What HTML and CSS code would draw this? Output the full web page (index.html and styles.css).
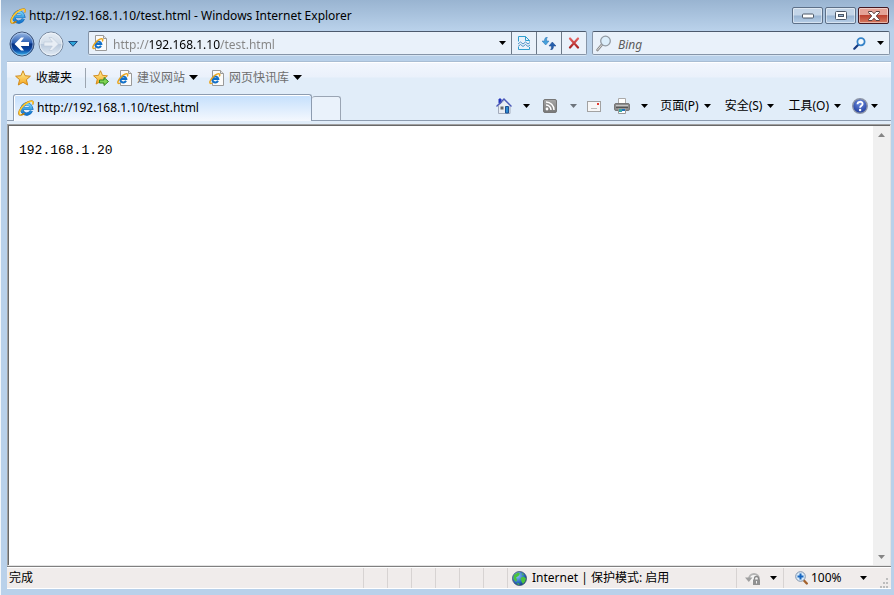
FILE: index.html
```
<!DOCTYPE html>
<html lang="zh-CN">
<head>
<meta charset="utf-8">
<title>http://192.168.1.10/test.html - Windows Internet Explorer</title>
<link rel="stylesheet" href="styles.css">
</head>
<body>
<svg class="defs" aria-hidden="true">
  <defs>
    <linearGradient id="gE" x1="0" y1="0" x2="0" y2="1"><stop offset="0" stop-color="#6fd0f8"/><stop offset="1" stop-color="#1173cc"/></linearGradient>
    <linearGradient id="gStar" x1="0" y1="0" x2="0" y2="1"><stop offset="0" stop-color="#fff3a0"/><stop offset="1" stop-color="#f5a31a"/></linearGradient>
    <linearGradient id="gBack" x1="0" y1="0" x2="0" y2="1"><stop offset="0" stop-color="#9fbde6"/><stop offset=".45" stop-color="#2b5fb4"/><stop offset=".5" stop-color="#07307f"/><stop offset=".75" stop-color="#0b49a5"/><stop offset="1" stop-color="#3cc0f5"/></linearGradient>
    <linearGradient id="gFwd" x1="0" y1="0" x2="0" y2="1"><stop offset="0" stop-color="#e6edf5"/><stop offset=".48" stop-color="#d3deea"/><stop offset=".52" stop-color="#b9c9dc"/><stop offset="1" stop-color="#e3ecf5"/></linearGradient>
    <linearGradient id="gRed" gradientUnits="userSpaceOnUse" x1="0" y1="0" x2="0" y2="12"><stop offset="0" stop-color="#ec6a6a"/><stop offset="1" stop-color="#a01818"/></linearGradient>
    <linearGradient id="gGrey" x1="0" y1="0" x2="0" y2="1"><stop offset="0" stop-color="#a8a8a8"/><stop offset="1" stop-color="#777"/></linearGradient>
    <radialGradient id="gGlobe" cx=".35" cy=".3" r=".8"><stop offset="0" stop-color="#8fc8f5"/><stop offset=".6" stop-color="#2a6cc0"/><stop offset="1" stop-color="#0f3575"/></radialGradient>
    <radialGradient id="gHelp" cx=".5" cy=".3" r=".8"><stop offset="0" stop-color="#6f8fe0"/><stop offset="1" stop-color="#122f92"/></radialGradient>
    <symbol id="ie" viewBox="0 0 16 16">
      <path d="M13.400 10.800A5 5 0 1 1 13.700 8.500H5" fill="none" stroke="#1565b4" stroke-width="3.200"/>
      <path d="M13.200 10.800A5 5 0 1 1 13.500 8.500H5" fill="none" stroke="url(#gE)" stroke-width="2.300"/>
      <path d="M14.600 4.500C15.600 2 15 .8 13 1 9 1.300 3.400 6.400 1.600 10.600.4 13.400.8 15.400 3 15c1.200-.2 2.400-.9 3.500-1.700" fill="none" stroke="#c4820f" stroke-width="1.600"/>
      <path d="M14.600 4C15.300 2 14.700 1.200 13 1.300 9.200 1.600 3.700 6.600 2 10.600c-1 2.600-.7 4.300 1 4" fill="none" stroke="#ffcc35" stroke-width="1.300"/>
    </symbol>
    <symbol id="page" viewBox="0 0 16 16">
      <path d="M3.500.5h8l3 3v12h-11z" fill="#fbfbfa" stroke="#9a9a9a"/>
      <path d="M11.500.5v3h3" fill="#e4e4e4" stroke="#9a9a9a"/>
      <path d="M9 10.800A3 3 0 1 1 9.300 9H4" fill="none" stroke="#1270c8" stroke-width="2"/>
      <path d="M10.300 6.500C11.500 4 10.300 3.200 8 4.200 5 5.500 1.600 9.200 1 11.500c-.5 1.800.2 2.500 2 1.700" fill="none" stroke="#eaa51c" stroke-width="1.400"/>
    </symbol>
    <symbol id="star" viewBox="0 0 16 16">
      <path d="M8 .8l2.100 4.900 5.300.5-4 3.500 1.300 5.300L8 12.300 3.300 15l1.300-5.300-4-3.500 5.300-.5z" fill="url(#gStar)" stroke="#d08a1c" stroke-linejoin="round"/>
    </symbol>
    <symbol id="down" viewBox="0 0 9 5"><path d="M0 0h9L4.500 5z" fill="currentColor"/></symbol>
  </defs>
</svg>

<header class="titlebar">
  <svg class="i16"><use href="#ie"/></svg>
  <h1>http://192.168.1.10/test.html - Windows Internet Explorer</h1>
  <div class="winbtns">
    <button aria-label="最小化"><svg width="12" height="6" viewBox="0 0 12 6"><rect x=".5" y="1" width="11" height="4" rx="1" fill="#fff" stroke="#4c5868"/></svg></button>
    <button aria-label="最大化"><svg width="12" height="9" viewBox="0 0 12 9"><rect x=".5" y=".5" width="11" height="8" rx="1" fill="#fff" stroke="#4c5868"/><rect x="3.500" y="3.500" width="5" height="2" fill="#9ab6d2" stroke="#4c5868"/></svg></button>
    <button class="close" aria-label="关闭"><svg width="12" height="10" viewBox="0 0 12 10"><path d="M.5.500h3.500L6 2.800 8 .5h3.500v1L8.300 5l3.200 3.500v1H8L6 7.200 4 9.500H.5v-1L3.700 5 .5 1.500z" fill="#fff" stroke="#5b4040"/></svg></button>
  </div>
</header>

<nav class="navbar">
  <div class="travel">
    <button class="round" aria-label="后退"><svg width="26" height="26" viewBox="0 0 26 26"><circle cx="13" cy="13" r="12" fill="url(#gBack)" stroke="#3d5275"/><circle cx="13" cy="13" r="11" fill="none" stroke="#bcd4f0" stroke-opacity=".6"/><path d="M5.500 13l6.500-6.500h3L11.700 11H20v4h-8.300l3.300 4.500h-3z" fill="#fff"/></svg></button>
    <button class="round" aria-label="前进"><svg width="26" height="26" viewBox="0 0 26 26"><circle cx="13" cy="13" r="12" fill="url(#gFwd)" stroke="#77889e"/><circle cx="13" cy="13" r="11" fill="none" stroke="#f4f8fc" stroke-opacity=".7"/><path d="M20.500 13L14 6.500h-3l3.300 4.500H6v4h8.300L11 19.500h3z" fill="#e8eef5" stroke="#b8c6d6" stroke-width=".6"/></svg></button>
    <button class="recent" aria-label="最近的网页"><svg width="10" height="6" viewBox="0 0 10 6"><path d="M.7.500h8.600L5 5.300z" fill="#2fa5d8" stroke="#1b4a80"/></svg></button>
  </div>
  <div class="address">
    <svg class="i16"><use href="#page"/></svg>
    <input class="url" type="text" aria-label="地址" value="http://192.168.1.10/test.html">
    <button class="drop" aria-label="显示地址"><svg class="small"><use href="#down"/></svg></button>
    <button class="cell" aria-label="兼容性视图"><svg width="12" height="14" viewBox="0 0 12 14"><path d="M.5 5.500V.5h7l4 4v1M.5 11v2.500h11V11" fill="none" stroke="#2f9fd0"/><path d="M7.500.5v4h4" fill="none" stroke="#2f9fd0"/><path d="M0 8l2.500-2L5 8l2.500-2L10 8l2-1.500M0 10.500l2.500-2 2.500 2 2.500-2 2.500 2L12 9" fill="none" stroke="#3c88bf" stroke-width=".9"/></svg></button>
    <button class="cell" aria-label="刷新"><svg width="14" height="13" viewBox="0 0 14 13"><path d="M5.500 0C3 .3 2.300 2 2.600 4H0l3.700 4L7 4H4.700C4.500 2.300 4.600 1 5.500 0z" fill="#45a2dc" stroke="#2b6cb0" stroke-width=".5"/><path d="M8.500 13c2.500-.3 3.200-2 2.900-4H14l-3.700-4L7 9h2.300c.2 1.700.1 3-.8 4z" fill="#245fae" stroke="#1c4788" stroke-width=".5"/></svg></button>
    <button class="cell" aria-label="停止"><svg width="12" height="12" viewBox="0 0 12 12"><path d="M2 1.500l8 9M10 1.500l-8 9" stroke="url(#gRed)" stroke-width="2.200" stroke-linecap="round"/></svg></button>
  </div>
  <div class="search">
    <svg width="16" height="17" viewBox="0 0 16 17"><path d="M6 9.500L1.500 15" stroke="#888" stroke-width="2.600" stroke-linecap="round"/><path d="M6 9.500L1.500 15" stroke="#ddd" stroke-linecap="round"/><circle cx="9.500" cy="6" r="4.800" fill="#dceefb" stroke="#929aa3" stroke-width="1.300"/></svg>
    <input class="query" type="text" aria-label="搜索" placeholder="Bing">
    <button class="plain" aria-label="搜索"><svg width="13" height="13" viewBox="0 0 13 13"><path d="M5 8L1.300 11.700" stroke="#173a80" stroke-width="2.200" stroke-linecap="round"/><circle cx="8" cy="4.700" r="3.600" fill="#f2f8fd" stroke="#3583c8" stroke-width="1.800"/></svg></button>
    <button class="plain" aria-label="搜索选项"><svg class="small"><use href="#down"/></svg></button>
  </div>
</nav>

<section class="window">
  <div class="favorites">
    <button class="tool fav"><svg class="i16"><use href="#star"/></svg>收藏夹</button>
    <span class="sep"></span>
    <button class="plain" aria-label="添加到收藏夹栏"><svg class="i16" viewBox="0 0 16 16"><use href="#star" width="15" height="15"/><path d="M6.500 10H11V7.500l4.500 4-4.500 4V13H6.500z" fill="#7ed352" stroke="#2f8a24"/></svg></button>
    <button class="tool link"><svg class="i16"><use href="#page"/></svg>建议网站<svg class="arrow"><use href="#down"/></svg></button>
    <button class="tool link"><svg class="i16"><use href="#page"/></svg>网页快讯库<svg class="arrow"><use href="#down"/></svg></button>
  </div>
  <div class="tabrow">
    <button class="tab"><svg class="i16"><use href="#ie"/></svg>http://192.168.1.10/test.html</button>
    <button class="newtab" aria-label="新选项卡"></button>
    <div class="commands">
      <button class="split" aria-label="主页"><svg width="16" height="16" viewBox="0 0 16 16"><path d="M2.500 7.500L8.500 2 14 7.500v8H2.500z" fill="#e9edf3" stroke="#a3abbb"/><path d="M3 1h2v4H3z" fill="#2332c8" stroke="#2332b8"/><path d="M.5 8.500L8 1l7.500 7.500" fill="none" stroke="#4b59b8" stroke-width="1.300"/><rect x="4.500" y="8.500" width="3" height="3" fill="#666"/><path d="M9.500 8.500h3V15h-3z" fill="#2b8ad0" stroke="#1c4f92"/></svg><svg class="small"><use href="#down"/></svg></button>
      <button class="split muted" aria-label="源"><svg width="14" height="14" viewBox="0 0 14 14"><rect x=".5" y=".5" width="13" height="13" rx="1.500" fill="url(#gGrey)" stroke="#777"/><circle cx="4" cy="10" r="1.400" fill="#fff"/><path d="M3 6a5 5 0 0 1 5 5M3 3a8 8 0 0 1 8 8" fill="none" stroke="#fff" stroke-width="1.500"/></svg><svg class="small"><use href="#down"/></svg></button>
      <button class="plain mail" aria-label="阅读邮件"><svg width="14" height="11" viewBox="0 0 14 11"><rect x=".5" y=".5" width="13" height="10" fill="#f7f7f7" stroke="#a2a2a2"/><rect x="10" y="2" width="2" height="2" fill="#e53b32"/><path d="M4 7.500h6" stroke="#bbb"/></svg></button>
      <button class="split print" aria-label="打印"><svg width="16" height="16" viewBox="0 0 16 16"><path d="M4.500.5h7V6h-7z" fill="#fff" stroke="#aaa"/><rect x=".5" y="5.500" width="15" height="7" rx="1.500" fill="#8c8c8c" stroke="#777"/><path d="M2 7.500h12" stroke="#c4c4c4"/><path d="M2 9.500h12" stroke="#555"/><path d="M4.500 10.500h7v5h-7z" fill="#fff" stroke="#999"/><path d="M5 11h3v3H5z" fill="#38a8a2"/><path d="M8 11h3v2H8z" fill="#2470c0"/></svg><svg class="small"><use href="#down"/></svg></button>
      <button class="menu">页面(P)<svg class="small"><use href="#down"/></svg></button>
      <button class="menu">安全(S)<svg class="small"><use href="#down"/></svg></button>
      <button class="menu">工具(O)<svg class="small"><use href="#down"/></svg></button>
      <button class="help" aria-label="帮助"><svg width="16" height="16" viewBox="0 0 16 16"><circle cx="8" cy="8" r="7.300" fill="url(#gHelp)" stroke="#8e96a8" stroke-width="1.400"/><path d="M5.500 6.200C5.500 3 10.600 3 10.600 6c0 1.700-2.500 1.900-2.500 3.800" fill="none" stroke="#fff" stroke-width="1.800"/><circle cx="8.100" cy="12" r="1.200" fill="#fff"/></svg><svg class="small"><use href="#down"/></svg></button>
    </div>
  </div>

  <main class="viewport">
    <p>192.168.1.20</p>
    <div class="scrollbar">
      <button aria-label="向上滚动"><svg width="7" height="4" viewBox="0 0 7 4"><path d="M0 4h7L3.500 0z" fill="#858585"/></svg></button>
      <button aria-label="向下滚动"><svg width="7" height="4" viewBox="0 0 7 4"><path d="M0 0h7L3.500 4z" fill="#858585"/></svg></button>
    </div>
  </main>

  <footer class="status">
    <span class="done">完成</span>
    <span class="slot"></span><span class="slot"></span><span class="slot"></span><span class="slot"></span><span class="slot"></span><span class="slot"></span>
    <span class="zone"><svg width="15" height="15" viewBox="0 0 15 15"><circle cx="7.500" cy="7.500" r="7" fill="url(#gGlobe)" stroke="#3a4d70" stroke-width=".8"/><path d="M2 4l4-2.500 2 1L6.500 5 4 6.500 5 9l-1 2-2.500-3zM8.500 7l3-1.500 2.500 2-1 3-2 2.500-1.500-2.500zM10 2l2 1.500-1.500 1zM5 12l3 1-2 1z" fill="#4bc43c"/></svg>Internet | 保护模式: 启用</span>
    <button class="privacy" aria-label="隐私"><svg width="16" height="15" viewBox="0 0 16 15"><path d="M4 8a5 5 0 1 1 5 5" fill="#f5f5f5" stroke="#b4b4b4" stroke-width="2"/><path d="M0 6.500h7.500L3.800 11z" fill="#a0a0a0"/><path d="M9.500 9V7.500a2 2 0 0 1 4 0V9" fill="none" stroke="#888" stroke-width="1.300"/><rect x="8" y="8.500" width="7" height="5.500" fill="#919191"/><path d="M11.500 10v2.500" stroke="#eee"/></svg><svg class="small"><use href="#down"/></svg></button>
    <button class="zoom"><svg width="13" height="14" viewBox="0 0 13 14"><path d="M8 8.500l3.800 4" stroke="#a4622c" stroke-width="2.400" stroke-linecap="round"/><circle cx="5.500" cy="5.500" r="4.800" fill="#d9ebfa" stroke="#8193ac"/><path d="M5.500 2.500v6M2.500 5.500h6" stroke="#1766c0" stroke-width="2"/></svg>100%<svg class="small"><use href="#down"/></svg></button>
    <svg class="grip" width="10" height="10" viewBox="0 0 10 10"><path d="M7 0h2v2H7zM4 4h2v2H4zM7 4h2v2H7zM1 8h2v2H1zM4 8h2v2H4zM7 8h2v2H7z" fill="#bdbdbd"/></svg>
  </footer>
</section>
</body>
</html>
```
FILE: styles.css
```
* { box-sizing: border-box; }
html { height: 100%; }
body {
  display: flex;
  flex-direction: column;
  height: 100%;
  margin: 0;
  padding: 0 3px 6px 6px;
  border-left: 1px solid #f4f7fa;
  background: linear-gradient(#99b4d1, #b9d1ea 30px);
  color: #000;
  font: 12px/18px "Noto Sans", "Noto Sans CJK SC", sans-serif;
}
svg { display: block; flex: none; }
.defs { position: absolute; width: 0; height: 0; }
.i16 { width: 16px; height: 16px; }
.arrow { width: 9px; height: 5px; }
.small { width: 7px; height: 4px; }
button {
  display: flex;
  align-items: center;
  padding: 0;
  border: 0;
  background: none;
  color: inherit;
  font: inherit;
  white-space: nowrap;
}
input {
  min-width: 0;
  padding: 0;
  border: 0;
  outline: 0;
  font: inherit;
}

/* title bar */
.titlebar { display: flex; align-items: center; gap: 3px; height: 31px; padding-left: 3px; flex: none; }
.titlebar h1 { flex: 1; margin: 0; font-size: 12px; font-weight: 400; }
.winbtns { display: flex; gap: 2px; padding-right: 2px; }
.winbtns button {
  justify-content: center;
  width: 31px;
  height: 17px;
  border: 1px solid #5d7088;
  border-radius: 2px;
  background: linear-gradient(#c3d5e8 48%, #98b4d2 52%, #b7cfe8);
  box-shadow: inset 0 0 0 1px rgba(255, 255, 255, .45);
}
.winbtns .close { border-color: #431822; background: linear-gradient(#e5a296 45%, #bd4230 50%, #d67a61); }

/* navigation */
.navbar { display: flex; align-items: flex-start; height: 30px; flex: none; }
.travel { display: flex; flex: none; align-items: center; gap: 3px; width: 81px; padding-left: 2px; }
.recent { margin-left: 1px; }
.address, .search {
  display: flex;
  align-items: center;
  height: 24px;
  border: 1px solid #8695a8;
  border-top-color: #4c5a6d;
  border-radius: 2px;
  background: #e9f1fa;
  box-shadow: 0 1px 0 #d5e4f3;
}
.address { flex: 1 1 499px; padding-left: 3px; }
.url {
  flex: 1;
  height: 22px;
  padding-top: 2px;
  margin-left: 5px;
  background: linear-gradient(90deg, #858585 36px, #000 36px, #000 107px, #858585 107px);
  -webkit-background-clip: text;
  background-clip: text;
  color: transparent;
}
.drop { padding: 0 5px; }
.cell { justify-content: center; width: 25px; height: 22px; border-left: 1px solid #6c7988; }
.search { flex: 1 1 298px; margin: 0 1px 0 5px; padding: 0 5px 0 3px; }
.query { flex: 1; height: 22px; margin-left: 6px; padding-top: 2px; background: none; font-style: italic; }
.query::placeholder { color: #5c5c5c; opacity: 1; }
.search .plain + .plain { margin-left: 11px; }

/* toolbars */
.window { display: flex; flex: 1; flex-direction: column; min-height: 0; background: #e1edf9; border-top: 1px solid #a9bdd3; }
.favorites {
  display: flex;
  align-items: center;
  height: 32px;
  flex: none;
  padding: 0 0 2px 8px;
  border-top: 1px solid #fff;
  background: linear-gradient(#f2f6fd, #eaf1fb 14px, #e1edf9 15px);
}
.tool { gap: 5px; }
.sep { width: 1px; height: 20px; margin: 0 7px 0 13px; background: #9ca5b0; }
.link { color: #6e6e6e; margin-left: 8px; gap: 4px; }
.link + .link { margin-left: 11px; }
.link .arrow { color: #000; }
.tabrow { display: flex; align-items: flex-end; height: 27px; flex: none; border-bottom: 1px solid #8d9cb0; }
.tab {
  flex: 0 1 299px;
  gap: 3px;
  height: 27px;
  margin: 0 0 -1px 6px;
  padding-left: 4px;
  border: 1px solid #8d9cb0;
  border-bottom: 0;
  border-radius: 3px 3px 0 0;
  background: linear-gradient(#c4dffc, #f4f8fe);
  box-shadow: inset 0 1px 0 #fff, inset 1px 0 0 #fff;
}
.newtab { width: 29px; height: 24px; border: 1px solid #9aa5b4; border-left: 0; border-bottom: 0; border-radius: 3px 3px 0 0; background: #eaf2fb; }
.commands { display: flex; align-items: center; height: 28px; margin: 0 13px 0 auto; }
.split { gap: 11px; margin-right: 13px; }
.muted { gap: 13px; margin-right: 10px; }
.muted .small { color: #6d747c; }
.print { gap: 11px; margin: 0 12px 0 13px; }
.menu { gap: 5px; margin-right: 14px; }
.help { gap: 3px; }
.tabrow .menu:nth-last-child(2) { margin-right: 11px; }

/* document */
.viewport {
  display: flex;
  flex: 1;
  min-height: 0;
  margin-top: 3px;
  border: 1px solid #a0a0a0;
  border-right-color: #e3e3e3;
  border-bottom-color: #e3e3e3;
  background: #fff;
  box-shadow: inset 1px 1px 0 #696969;
}
.viewport p { flex: 1; margin: 0; padding: 17px 0 0 11px; font: 13px/18px "Liberation Mono", monospace; }
.scrollbar { display: flex; flex-direction: column; justify-content: space-between; width: 17px; margin-top: 1px; background: #f0f0f0; }
.scrollbar button { justify-content: center; height: 17px; }

/* status bar */
.status { display: flex; height: 23px; flex: none; padding-top: 1px; border-top: 1px solid #808080; border-bottom: 1px solid #fff; background: #f0eceb; box-shadow: inset 0 1px 0 #fff; }
.status > * { display: flex; align-items: center; }
.done { flex: 1; padding-left: 2px; }
.slot { width: 24px; border-left: 1px solid #d7d3d2; }
.zone { width: 229px; gap: 5px; padding-left: 4px; border-left: 1px solid #d7d3d2; }
.privacy { width: 47px; gap: 9px; padding-left: 8px; border-left: 1px solid #d7d3d2; }
.zoom { width: 96px; gap: 3px; padding-left: 11px; border-left: 1px solid #d7d3d2; }
.zoom .small { margin-left: 15px; }
.status .grip { align-self: flex-end; display: block; margin-right: 2px; }
```
